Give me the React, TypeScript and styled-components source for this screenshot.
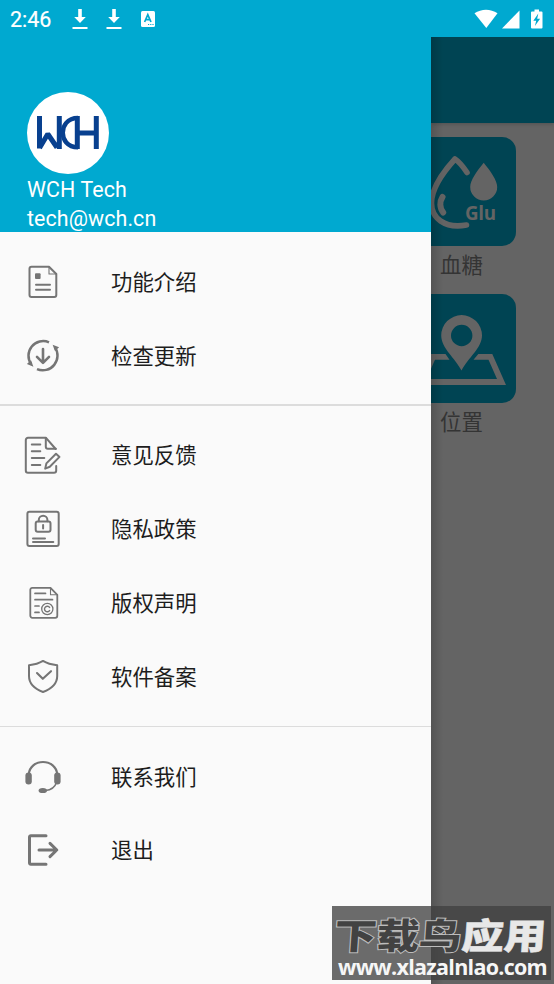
import React from "react";
import styled, { createGlobalStyle } from "styled-components";

const GlobalStyle = createGlobalStyle`
  *, *::before, *::after { box-sizing: border-box; }
  body {
    margin: 0;
    background: #646464;
    font-family: Roboto, "Noto Sans CJK SC", sans-serif;
  }
`;

const Screen = styled.div`
  position: relative;
  display: flex;
  flex-direction: column;
  width: 554px;
  height: 984px;
  overflow: hidden;
`;

const StatusBar = styled.header`
  display: flex;
  align-items: center;
  justify-content: space-between;
  flex: none;
  height: 37px;
  padding: 0 9px 0 10px;
  background: #00a9d0;
  color: #fff;
`;

const StatusGroup = styled.div<{ $gap: number }>`
  display: flex;
  align-items: center;
  gap: ${(p) => p.$gap}px;
`;

const Clock = styled.span`
  width: 44px;
  font-size: 21.5px;
  line-height: 36px;
  padding-top: 2px;
  white-space: nowrap;
  -webkit-text-stroke: 0.2px #fff;
`;

const Body = styled.div`
  display: flex;
  flex: 1;
  min-height: 0;
`;

const Drawer = styled.nav`
  flex: none;
  width: 431px;
  background: #fafafa;
`;

const Profile = styled.div`
  height: 195px;
  padding: 55px 27px 0;
  background: #00a9d0;
  color: #fff;
`;

const Avatar = styled.svg`
  display: block;
  width: 82px;
  height: 82px;
  border-radius: 50%;
  background: #fff;
`;

const ProfileLine = styled.div`
  font-size: 21.4px;
  line-height: 29px;
  letter-spacing: 0.1px;
  padding-top: 1px;
  height: 29px;
`;

const MenuGroup = styled.ul`
  margin: 0;
  padding: 13px 0 11.4px;
  list-style: none;
  & + & {
    padding: 12.6px 0 12px;
    border-top: 2px solid #dcdcdc;
  }
  & + & + & {
    padding-top: 13px;
    border-top-width: 1px;
  }
`;

const MenuItem = styled.li`
  display: flex;
  align-items: center;
  gap: 48px;
  height: 73.8px;
  padding-left: 23px;
  color: #1d1d1d;
  font-size: 21.4px;
  line-height: 30px;
`;

const MenuLabel = styled.span`
  padding-top: 2px;
`;

const MenuIcon = styled.svg`
  flex: none;
  width: 40px;
  height: 40px;
  fill: none;
  stroke: #757575;
  stroke-width: 2;
  stroke-linecap: round;
  stroke-linejoin: round;
`;

const Content = styled.main`
  position: relative;
  flex: 1;
  min-width: 0;
  overflow: hidden;
  background: #646464;
`;

const DrawerShadow = styled.div`
  position: absolute;
  inset: 0 auto 0 0;
  width: 12px;
  background: linear-gradient(90deg, rgba(0, 0, 0, 0.16), rgba(0, 0, 0, 0));
`;

const AppBar = styled.div`
  height: 86px;
  background: #004453;
  box-shadow: 0 1px 4px rgba(0, 0, 0, 0.2);
`;

const TileColumn = styled.div`
  display: flex;
  flex-direction: column;
  width: 109px;
  margin: 14px 0 0 -24px;
`;

const Tile = styled.figure`
  height: 157px;
  margin: 0;
`;

const TileArt = styled.svg`
  display: block;
  width: 109px;
  height: 109px;
  border-radius: 14px;
  background: #004453;
`;

const TileLabel = styled.figcaption`
  padding-top: 4px;
  color: #343434;
  font-size: 21.4px;
  line-height: 32px;
  text-align: center;
`;

const Watermark = styled.aside`
  position: absolute;
  left: 332px;
  top: 906px;
  width: 219px;
  height: 74px;
  padding: 0 0 0 4px;
  background: rgba(64, 64, 64, 0.77);
  white-space: nowrap;
`;

const WatermarkTitle = styled.div`
  display: flex;
  font-family: "Noto Sans CJK SC", sans-serif;
  font-size: 42.4px;
  font-weight: 900;
  line-height: 62px;
  height: 49px;
  transform: translate(-1px, -2px) skewX(-4deg) scaleY(0.84);
`;

const TitlePart = styled.span<{ $solid?: boolean }>`
  color: ${(p) => (p.$solid ? "#e8e8e8" : "#424242")};
  -webkit-text-stroke: ${(p) => (p.$solid ? "0.6px #e8e8e8" : "2.4px #bcbcbc")};
  paint-order: stroke fill;
`;

const WatermarkUrl = styled.div`
  padding-left: 2px;
  color: #f6f6f6;
  font-family: "Open Sans", sans-serif;
  font-size: 21.5px;
  font-weight: 700;
  letter-spacing: -0.72px;
  line-height: 24px;
`;

const DownloadGlyph = () => (
  <svg width="16" height="22" viewBox="0 0 16 22" fill="#fff">
    <path d="M6.2 1h3.6v8h4L8 15 2.2 9h4zM.5 19h15v2H.5z" />
  </svg>
);

const introIcon = (
  <>
    <path d="M8.5 4.7H26l7.3 7.3v21a2 2 0 0 1-2 2H8.5a2 2 0 0 1-2-2V6.7a2 2 0 0 1 2-2z" />
    <path d="M26 4.7V12h7.3" strokeWidth="1.1" />
    <rect x="12" y="11.2" width="5.6" height="5.8" rx="1" fill="#757575" stroke="none" />
    <path d="M13 22.7h14M13 27.8h14" />
  </>
);

const updateIcon = (
  <>
    <path d="M26 6.3A14.7 14.7 0 0 0 8.2 28.3M14 33.1A14.7 14.7 0 0 0 31.8 11.1" strokeWidth="2.5" strokeLinecap="butt" />
    <path d="M29.6 8.7l6.5 2.6-4.1 3.8zM10.4 30.7l-6.5-2.6L8 24.3z" fill="#757575" stroke="none" />
    <path d="M20 13v13.6M14 20.8l6 6 6-6" strokeWidth="2.6" />
  </>
);

const feedbackIcon = (
  <>
    <path d="M32.7 14L23 2.8H5A2.2 2.2 0 0 0 2.8 5v30.6A2.2 2.2 0 0 0 5 37.8h26a2.2 2.2 0 0 0 2.2-2.2V31" />
    <path d="M22.8 3v8.8a2 2 0 0 0 2 2h8M8.8 9.4h8.5M8.8 16.2h8.5M8.8 23.1h12.5M8.8 30h8.5" />
    <path d="M22.2 33.6l1.2-5.2L33 18.7l3.5 3.2-9.7 9.9z" />
  </>
);

const privacyIcon = (
  <>
    <rect x="4.4" y="2.8" width="31.3" height="34.2" rx="2" />
    <rect x="12.7" y="12.5" width="14.8" height="10.3" rx="2" />
    <path d="M15.8 12.3V11a4.3 4.3 0 0 1 8.6 0v1.3M20.1 16v3.4M10 29.4h12M10 33h20.3" />
  </>
);

const copyrightIcon = (
  <>
    <path d="M9 4.8h18.5l6.8 7v21a2 2 0 0 1-2 2H9.3a2 2 0 0 1-2-2v-26a2 2 0 0 1 2-2z" strokeWidth="1.8" />
    <path d="M27.5 4.8v7h6.8" strokeWidth="1.1" />
    <path d="M12 10.4h10.5M12 16.7h17.5M12 23h4M12 29.4h4" strokeWidth="1.7" />
    <circle cx="24.3" cy="26" r="5.6" strokeWidth="1.3" />
    <path d="M26.6 24.4a2.8 2.8 0 1 0 0 3.2" strokeWidth="1.4" />
  </>
);

const shieldIcon = (
  <>
    <path d="M20 3.9C15.5 6.7 11 7.7 6 8.2V19c0 7.9 5 12.6 14 16 9-3.4 14.2-8.1 14.2-16V8.2C29.2 7.7 24.5 6.7 20 3.9z" />
    <path d="M14 16l5.8 5.8 8.2-7.6" strokeWidth="2.1" />
  </>
);

const contactIcon = (
  <>
    <path d="M5.8 17C6.5 10 12.4 5 20 5s13.5 5 14.2 12" strokeWidth="2.2" />
    <path d="M33.5 25.5c-1.5 4.6-5 7.4-11 8" strokeWidth="1.5" />
    <g fill="#757575" stroke="none">
      <rect x="2.4" y="15.4" width="6.4" height="12" rx="3.2" />
      <rect x="31.2" y="15.4" width="6.4" height="12" rx="3.2" />
      <ellipse cx="19.8" cy="33.5" rx="4.2" ry="2.6" />
    </g>
  </>
);

const exitIcon = (
  <path d="M23 5.7H7.8a1.3 1.3 0 0 0-1.3 1.3v26a1.3 1.3 0 0 0 1.3 1.3H23M16 20h17.5M27 13.4l6.8 6.6-6.8 6.6" strokeWidth="3" />
);

const groups = [
  [
    { label: "功能介绍", icon: introIcon },
    { label: "检查更新", icon: updateIcon },
  ],
  [
    { label: "意见反馈", icon: feedbackIcon },
    { label: "隐私政策", icon: privacyIcon },
    { label: "版权声明", icon: copyrightIcon },
    { label: "软件备案", icon: shieldIcon },
  ],
  [
    { label: "联系我们", icon: contactIcon },
    { label: "退出", icon: exitIcon },
  ],
];

export default function App() {
  return (
    <>
      <GlobalStyle />
      <Screen>
        <StatusBar>
          <StatusGroup $gap={18}>
            <Clock>2:46</Clock>
            <StatusGroup $gap={18}>
              <DownloadGlyph />
              <DownloadGlyph />
              <svg width="16" height="18" viewBox="0 0 16 18">
                <rect x="1" y="1" width="14" height="16" rx="1.5" fill="#fff" />
                <path d="M4.6 12L7.8 4.6 11 12M5.7 9.7h4.2" fill="none" stroke="#00a9d0" strokeWidth="1.7" />
                <path d="M8 14.5h1.2M10.2 14.5h1.2M12.4 14.5h1.2" stroke="#00a9d0" strokeWidth="1.2" />
              </svg>
            </StatusGroup>
          </StatusGroup>
          <svg width="71" height="24" viewBox="0 0 71 24" fill="#fff">
            <path d="M.5 6.3C7.5 1.5 16.5 1.5 23.5 6.3L12.3 21z" />
            <path d="M45.5 3.5V21.5H28z" />
            <path d="M60.5 2.5h4.5v2h2.5a1 1 0 0 1 1 1V20.5a1 1 0 0 1-1 1h-9.5a1 1 0 0 1-1-1V5.5a1 1 0 0 1 1-1h2.5z" />
            <path d="M64.3 6.5l-5 7.2h2.9l-1.3 5.3 5.2-7.2h-2.9z" fill="#00a9d0" />
          </svg>
        </StatusBar>
        <Body>
          <Drawer>
            <Profile>
              <Avatar viewBox="0 0 82 82" fill="none" stroke="#08408f" strokeWidth="5">
                <path d="M12.5 24v32.5M12.5 56L20.8 42 30 55.5M32.3 24v33M69.3 24v33M50.3 41h19" strokeLinejoin="bevel" />
                <path d="M50.3 24v33" />
                <path d="M51 26C40 26 35.8 34 35.8 40.7S40 55.3 51 55.3" strokeWidth="4.4" />
              </Avatar>
              <ProfileLine>WCH Tech</ProfileLine>
              <ProfileLine>tech@wch.cn</ProfileLine>
            </Profile>
            {groups.map((items) => (
              <MenuGroup key={items[0].label}>
                {items.map((item) => (
                  <MenuItem key={item.label}>
                    <MenuIcon viewBox="0 0 40 40">{item.icon}</MenuIcon>
                    <MenuLabel>{item.label}</MenuLabel>
                  </MenuItem>
                ))}
              </MenuGroup>
            ))}
          </Drawer>
          <Content>
            <AppBar />
            <TileColumn>
              <Tile>
                <TileArt viewBox="0 0 109 109" fill="none" stroke="#646464" strokeLinecap="round">
                  <path d="M60 35.5C56 29.5 52.5 25 48 22 38 33 24.5 51 24.5 66c0 15 13 26 35 22" strokeWidth="5.6" strokeLinejoin="round" />
                  <path d="M35.5 60c-3 4.5-3 11 .7 15.5" strokeWidth="6" />
                  <path d="M76.7 25.7C70 34 63.2 43 63.2 50a13.5 13.5 0 0 0 27 0c0-7-6.8-16-13.5-24.3z" fill="#646464" stroke="none" />
                  <text x="58" y="82.5" fill="#646464" stroke="none" fontFamily="Open Sans, sans-serif" fontSize="18.8" fontWeight="700" letterSpacing="-0.3">Glu</text>
                </TileArt>
                <TileLabel>血糖</TileLabel>
              </Tile>
              <Tile>
                <TileArt viewBox="0 0 109 109" fill="#646464">
                  <path fillRule="evenodd" d="M54.5 76.5C48 64 34.2 54 34.2 41.5a20.4 20.4 0 1 1 40.8 0C75 54 61 64 54.5 76.5zM54.7 30.8a10.7 10.7 0 1 0 0 21.4 10.7 10.7 0 0 0 0-21.4z" />
                  <path d="M38.5 60H24L10 91h89L85.3 60h-14L66.5 65.7h15L90 85H19.5l8.500-19.300h14.500z" />
                </TileArt>
                <TileLabel>位置</TileLabel>
              </Tile>
            </TileColumn>
            <DrawerShadow />
          </Content>
        </Body>
        <Watermark>
          <WatermarkTitle>
            <TitlePart>下载鸟</TitlePart>
            <TitlePart $solid>应用</TitlePart>
          </WatermarkTitle>
          <WatermarkUrl>www.xlazalnlao.com</WatermarkUrl>
        </Watermark>
      </Screen>
    </>
  );
}
